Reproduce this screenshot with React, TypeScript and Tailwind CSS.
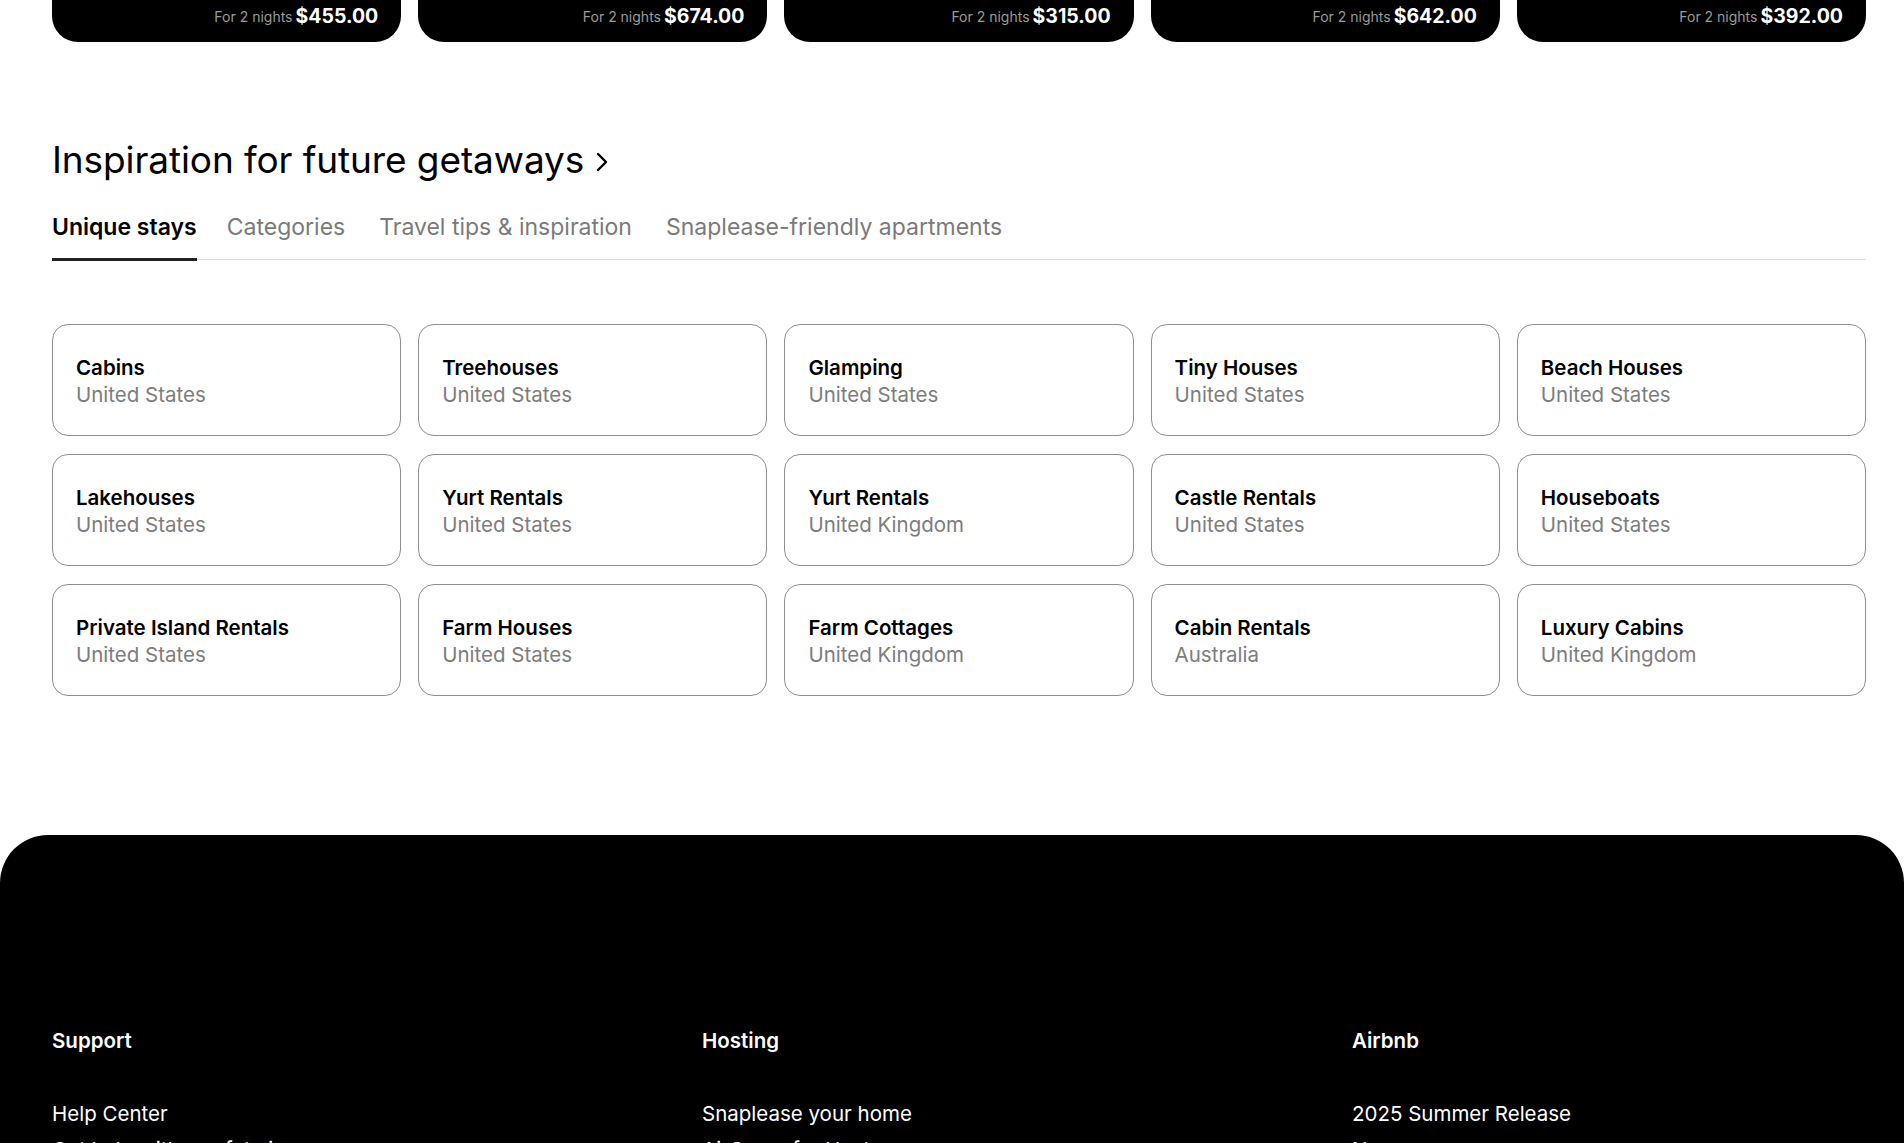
import React from "react";

const prices = ["$455.00", "$674.00", "$315.00", "$642.00", "$392.00"];

const stays: [string, string][] = [
  ["Cabins", "United States"],
  ["Treehouses", "United States"],
  ["Glamping", "United States"],
  ["Tiny Houses", "United States"],
  ["Beach Houses", "United States"],
  ["Lakehouses", "United States"],
  ["Yurt Rentals", "United States"],
  ["Yurt Rentals", "United Kingdom"],
  ["Castle Rentals", "United States"],
  ["Houseboats", "United States"],
  ["Private Island Rentals", "United States"],
  ["Farm Houses", "United States"],
  ["Farm Cottages", "United Kingdom"],
  ["Cabin Rentals", "Australia"],
  ["Luxury Cabins", "United Kingdom"],
];

const tabs = ["Unique stays", "Categories", "Travel tips & inspiration", "Snaplease-friendly apartments"];

const footerCols: { title: string; links: string[] }[] = [
  { title: "Support", links: ["Help Center", "Get help with a safety issue"] },
  { title: "Hosting", links: ["Snaplease your home", "AirCover for Hosts"] },
  { title: "Airbnb", links: ["2025 Summer Release", "Newsroom"] },
];

export default function App() {
  return (
    <div className="h-[1143px] overflow-hidden bg-white text-black" style={{ fontFamily: "Inter, 'Noto Sans', sans-serif" }}>
      <div className="pl-[52px] pr-[38px]">
        <div className="grid grid-cols-5 gap-x-[17px]">
          {prices.map((p, i) => (
            <div key={i} className="h-[42px] bg-black rounded-b-[26px] flex items-end justify-end pr-[23px] pb-[16px]">
              <span className="text-[14px] text-[#9a9a9a] leading-none mr-[3px] mb-[2px]">For 2 nights</span>
              <span className="text-[19.5px] font-bold text-white leading-none">{p}</span>
            </div>
          ))}
        </div>

        <h2 className="mt-[96px] flex items-center gap-[10px] text-[37px] leading-[44px] font-normal tracking-[-0.1px]">
          <span>Inspiration for future getaways</span>
          <svg width="16" height="22" viewBox="0 0 16 22" fill="none" className="mt-[4px]">
            <path d="M4 3l8 8-8 8" stroke="#000" strokeWidth="2.4" strokeLinecap="round" strokeLinejoin="round" />
          </svg>
        </h2>

        <div className="mt-[31px] flex border-b border-[#dddddd]">
          {tabs.map((t, i) => (
            <div
              key={t}
              className={
                i === 0
                  ? "mr-[30px] pb-[16px] border-b-[3px] border-[#222222] -mb-[2px] text-[23px] leading-[29px] font-semibold text-black"
                  : "mr-[34px] pb-[16px] text-[23px] leading-[29px] text-[#7a7a7a]"
              }
            >
              {t}
            </div>
          ))}
        </div>

        <div className="mt-[64px] grid grid-cols-5 gap-x-[17px] gap-y-[18px]">
          {stays.map(([title, sub], i) => (
            <div key={i} className="h-[112px] rounded-[16px] border border-[#8f8f8f] flex flex-col justify-center pl-[23px] pt-[2px]">
              <div className="text-[20.5px] leading-[27px] font-semibold text-black">{title}</div>
              <div className="text-[20.5px] leading-[27px] text-[#7d7d7d]">{sub}</div>
            </div>
          ))}
        </div>
      </div>

      <footer className="mt-[139px] bg-black rounded-t-[48px] pt-[192px] pb-[80px] pl-[52px] pr-[38px]">
        <div className="grid grid-cols-[650px_650px_1fr]">
          {footerCols.map((c) => (
            <div key={c.title}>
              <div className="text-[20.5px] leading-[28px] font-semibold text-white">{c.title}</div>
              <ul className="mt-[45px] flex flex-col gap-[8px]">
                {c.links.map((l) => (
                  <li key={l} className="text-[20.5px] leading-[28px] text-white">{l}</li>
                ))}
              </ul>
            </div>
          ))}
        </div>
      </footer>
    </div>
  );
}
